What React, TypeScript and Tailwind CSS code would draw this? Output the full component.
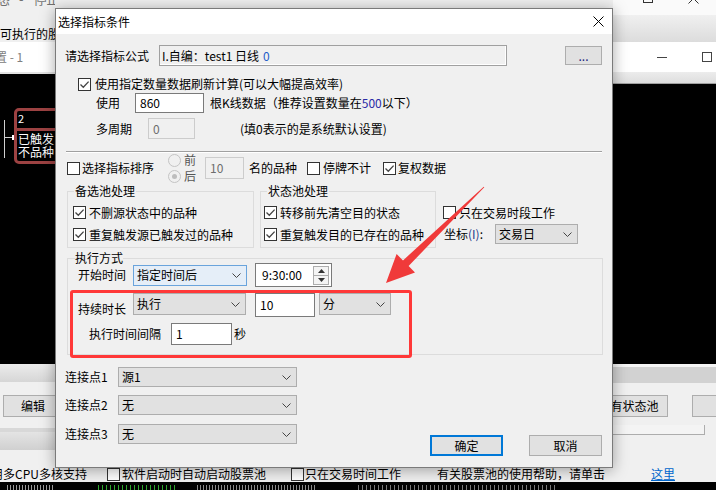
import React from 'react'

const Chevron = () => (
  <svg width="9" height="5" viewBox="0 0 9 5" className="shrink-0">
    <path d="M0.5 0.5 4.5 4.5 8.5 0.5" fill="none" stroke="#444" strokeWidth="1" />
  </svg>
)

const Check = ({ checked = false, className = '' }: { checked?: boolean; className?: string }) => (
  <span className={`flex h-[13px] w-[13px] shrink-0 items-center justify-center border border-[#333] bg-white ${className}`}>
    {checked && (
      <svg width="11" height="11" viewBox="0 0 11 11">
        <path d="M1.5 5.5 4.3 8.3 9.6 2.6" fill="none" stroke="#444" strokeWidth="1.3" />
      </svg>
    )}
  </span>
)

const Radio = ({ on = false }: { on?: boolean }) => (
  <span className="flex h-[13px] w-[13px] shrink-0 items-center justify-center rounded-full border border-[#c4c4c4] bg-[#f0f0f0]">
    {on && <span className="h-[5px] w-[5px] rounded-full bg-[#bdbdbd]" />}
  </span>
)

const Select = ({ value, className = '', hover = false }: { value: string; className?: string; hover?: boolean }) => (
  <div
    className={`flex shrink-0 items-center justify-between border pl-[3px] pr-[5px] ${
      hover ? 'border-[#6aa4dc] bg-[#e5eef8]' : 'border-[#adadad] bg-[#e1e1e1]'
    } ${className}`}
  >
    <span>{value}</span>
    <Chevron />
  </div>
)

function LeftPane() {
  return (
    <div className="flex w-[55px] shrink-0 flex-col">
      <div className="flex h-[15px] items-start whitespace-nowrap text-[13px] leading-[15px] text-[#707070]">
        <span className="-ml-[3px] -mt-[9px]">态</span>
        <span className="ml-[9px] -mt-[9px]">-</span>
        <span className="ml-[10px] -mt-[9px]">停止中</span>
      </div>
      <div className="h-[27px] whitespace-nowrap pt-[12px]">可执行的股</div>
      <div className="h-[30px] whitespace-nowrap bg-white pt-[8px] text-[#808080]">
        <span className="-ml-[5px]">置 - 1</span>
      </div>
      <div className="h-[2px] bg-[#e3e3e3]" />
      <div className="relative h-[290px] bg-black">
        {/* 连线 */}
        <svg width="16" height="60" className="absolute left-0 top-[44px]">
          <path d="M4.5 2 V40 M4.5 19.5 H16" stroke="#d0d0d0" strokeWidth="1" fill="none" />
          <rect x="12" y="17" width="4" height="5" fill="#fff" />
        </svg>
        <div className="absolute left-[14px] top-[34px] flex h-[56px] w-[64px] flex-col rounded-[5px] border-[3px] border-[#9c4242] text-white">
          <div className="h-[20px] border-b-[3px] border-[#9c4242] pl-[1px] pt-[2px] text-[11px] leading-[11px]">2</div>
          <div className="pl-[1px] pt-px text-[12px] leading-[13px]">
            <div>已触发</div>
            <div>不品种</div>
          </div>
        </div>
      </div>
      <div className="h-[18px] bg-gradient-to-b from-[#ececec] to-[#d6d6d6]" />
      <div className="h-[13px]" />
      <div className="ml-[3px] flex h-[22px] w-[60px] items-center justify-center border border-[#adadad] bg-[#e1e1e1]">编辑</div>
      <div className="h-[11px]" />
      <div className="h-[4px] bg-[#d8d8d8]" />
      <div className="h-[18px] bg-gradient-to-b from-[#e4e4e4] to-[#d0d0d0]" />
      <div className="h-[16px]" />
    </div>
  )
}

function RightPane() {
  return (
    <div className="flex w-[103px] shrink-0 flex-col">
      <div className="flex h-[15px] items-start bg-[#fafafa]">
        <span className="ml-[30px] -mt-[7px] h-[10px] w-[10px] border border-[#333]" />
        <svg width="11" height="11" viewBox="0 0 11 11" className="ml-[35px] -mt-[7px]">
          <path d="M0.5 0.5 10.5 10.5 M10.5 0.5 0.5 10.5" stroke="#333" strokeWidth="1" />
        </svg>
      </div>
      <div className="h-[27px] bg-gradient-to-b from-[#f0f0f0] to-[#dcdcdc]" />
      <div className="flex h-[30px] items-center bg-white">
        <span className="ml-[44px] h-px w-[10px] bg-[#444]" />
        <span className="ml-[35px] h-[10px] w-[10px] border border-[#444]" />
      </div>
      <div className="h-[11px] bg-gradient-to-b from-[#ececec] to-[#dedede]" />
      <div className="h-px bg-[#a0a0a0]" />
      <div className="h-[280px] bg-black" />
      <div className="h-[3px] bg-[#f5f5f5]" />
      <div className="h-[16px] bg-[#d2d2d2]" />
      <div className="h-[12px]" />
      <div className="flex h-[22px]">
        <div className="-ml-[12px] flex h-[22px] w-[67px] shrink-0 items-center justify-center border border-[#adadad] bg-[#e1e1e1]">有状态池</div>
        <div className="ml-[24px] h-[22px] w-[40px] shrink-0 border border-[#adadad] bg-[#e1e1e1]" />
      </div>
      <div className="h-[8px]" />
      <div className="h-[10px] w-[92px] border-b border-r border-[#adadad] bg-[#f4f4f4]" />
      <div className="h-[31px]" />
    </div>
  )
}

function StatusRow() {
  return (
    <div className="flex h-[16px] items-center whitespace-nowrap bg-[#f0f0f0]">
      <span className="w-[107px] shrink-0">
        <span className="-ml-[9px]">用多CPU多核支持</span>
      </span>
      <span className="flex w-[184px] shrink-0 items-center">
        <Check />
        <span className="ml-[2px]">软件启动时自动启动股票池</span>
      </span>
      <span className="flex w-[146px] shrink-0 items-center">
        <Check />
        <span className="ml-[1px]">只在交易时间工作</span>
      </span>
      <span className="w-[214px] shrink-0">有关股票池的使用帮助，请单击</span>
      <span className="text-[#0066cc] underline">这里</span>
    </div>
  )
}

function Dialog() {
  return (
    <div className="absolute left-[55px] top-[8px] flex h-[460px] w-[558px] flex-col overflow-hidden border border-[#7a7a7a] bg-[#f0f0f0] shadow-[0_2px_14px_rgba(0,0,0,0.35)]">
      <div className="flex h-[25px] shrink-0 items-center justify-between bg-white pl-[2px] pr-[8px]">
        <span>选择指标条件</span>
        <svg width="11" height="11" viewBox="0 0 11 11">
          <path d="M0.5 0.5 10.5 10.5 M10.5 0.5 0.5 10.5" stroke="#000" strokeWidth="1" />
        </svg>
      </div>

      <div className="flex flex-col pl-[9px] pt-[11px]">
        {/* 公式 */}
        <div className="flex h-[21px] items-center">
          <span className="w-[94px] shrink-0">请选择指标公式</span>
          <div className="flex h-[21px] w-[348px] shrink-0 items-center border border-[#a0a0a0] pl-[2px] shadow-[inset_-1px_-1px_0_#ffffff]">
            I.自编：test1 日线<span className="ml-[4px] text-[#1e5cc8]">0</span>
          </div>
          <div className="ml-[58px] flex h-[19px] w-[37px] shrink-0 items-center justify-center border border-[#adadad] bg-[#e1e1e1] text-[#1a237e]">
            ...
          </div>
        </div>

        <div className="mt-[11px] flex h-[14px] items-center">
          <Check checked className="ml-[13px]" />
          <span className="ml-[4px]">使用指定数量数据刷新计算(可以大幅提高效率)</span>
        </div>

        <div className="mt-[2px] flex h-[20px] items-center">
          <span className="ml-[31px] w-[39px] shrink-0">使用</span>
          <div className="flex h-[20px] w-[69px] shrink-0 items-center border border-[#7a7a7a] bg-white pl-[4px]">860</div>
          <span className="ml-[6px]">
            根K线数据（推荐设置数量在<span className="text-[#2a2aa6]">500</span>以下）
          </span>
        </div>

        <div className="mt-[5px] flex h-[21px] items-center">
          <span className="ml-[31px] w-[52px] shrink-0">多周期</span>
          <div className="flex h-[21px] w-[47px] shrink-0 items-center border border-[#cccccc] bg-[#f0f0f0] pl-[4px] text-[#6d6d6d]">0</div>
          <span className="ml-[45px]">(填0表示的是系统默认设置)</span>
        </div>

        <div className="ml-[1px] mt-[12px] h-[2px] w-[536px] border-b border-t border-b-white border-t-[#a0a0a0]" />

        {/* 排序 */}
        <div className="flex h-[30px] items-center">
          <Check className="ml-[2px]" />
          <span className="ml-[2px]">选择指标排序</span>
          <div className="ml-[14px] flex h-[30px] flex-col text-[#555]">
            <div className="flex h-[14px] items-center">
              <Radio />
              <span className="ml-[3px]">前</span>
            </div>
            <div className="mt-[2px] flex h-[14px] items-center">
              <Radio on />
              <span className="ml-[3px]">后</span>
            </div>
          </div>
          <div className="ml-[9px] flex h-[22px] w-[39px] shrink-0 items-center border border-[#cccccc] bg-[#f0f0f0] pl-[4px] text-[#6d6d6d]">10</div>
          <span className="ml-[5px]">名的品种</span>
          <Check className="ml-[10px]" />
          <span className="ml-[3px]">停牌不计</span>
          <Check checked className="ml-[12px]" />
          <span className="ml-[2px]">复权数据</span>
        </div>

        {/* 备选池 / 状态池 */}
        <div className="mt-[1px] flex items-start">
          <fieldset className="ml-[2px] h-[64px] w-[187px] shrink-0 border border-[#dcdcdc] pl-[5px]">
            <legend className="ml-[1px] px-[1px] leading-[14px]">备选池处理</legend>
            <div className="mt-[7px] flex h-[15px] items-center">
              <Check checked />
              <span className="ml-[3px]">不删源状态中的品种</span>
            </div>
            <div className="mt-[7px] flex h-[15px] items-center">
              <Check checked />
              <span className="ml-[3px]">重复触发源已触发过的品种</span>
            </div>
          </fieldset>
          <fieldset className="ml-[6px] h-[64px] w-[176px] shrink-0 border border-[#dcdcdc] pl-[3px]">
            <legend className="ml-[3px] px-[1px] leading-[14px]">状态池处理</legend>
            <div className="mt-[7px] flex h-[15px] items-center">
              <Check checked />
              <span className="ml-[3px]">转移前先清空目的状态</span>
            </div>
            <div className="mt-[7px] flex h-[15px] items-center">
              <Check checked />
              <span className="ml-[3px]">重复触发目的已存在的品种</span>
            </div>
          </fieldset>
          <div className="ml-[7px] flex flex-col">
            <div className="mt-[22px] flex h-[13px] items-center">
              <Check />
              <span className="ml-[3px]">只在交易时段工作</span>
            </div>
            <div className="mt-[5px] flex h-[20px] items-center">
              <span className="ml-[1px] w-[51px] shrink-0">
                坐标<span className="text-[#1c3c8c]">(I)</span>:
              </span>
              <Select value="交易日" className="h-[20px] w-[83px]" />
            </div>
          </div>
        </div>

        {/* 执行方式 */}
        <fieldset className="ml-[2px] mt-[3px] h-[104px] w-[536px] border border-[#dcdcdc] pl-[7px]">
          <legend className="leading-[14px]">执行方式</legend>
          <div className="-mt-[2px] flex h-[24px] items-center pl-[3px]">
            <span className="w-[55px] shrink-0">开始时间</span>
            <Select value="指定时间后" hover className="h-[21px] w-[114px]" />
            <div className="ml-[8px] flex h-[24px] w-[77px] shrink-0 items-center border border-[#7a7a7a] bg-white pl-[6px]">
              <span className="flex-1">9:30:00</span>
              <div className="mr-[2px] flex h-[19px] w-[16px] flex-col border border-[#adadad] bg-[#f4f4f4]">
                <div className="flex flex-1 items-center justify-center border-b border-[#adadad]">
                  <svg width="7" height="4" viewBox="0 0 7 4"><path d="M0 4 3.5 0 7 4Z" fill="#333" /></svg>
                </div>
                <div className="flex flex-1 items-center justify-center">
                  <svg width="7" height="4" viewBox="0 0 7 4"><path d="M0 0 3.5 4 7 0Z" fill="#333" /></svg>
                </div>
              </div>
            </div>
          </div>

          <div className="-ml-[5px] mt-[3px] h-[68px] w-[342px] rounded-[3px] border-[3px] border-[#ff3838]">
            <div className="flex items-start">
              <span className="ml-[5px] mt-[9px] w-[55px] shrink-0">持续时长</span>
              <Select value="执行" className="h-[22px] w-[113px]" />
              <div className="ml-[9px] flex h-[24px] w-[60px] shrink-0 items-center border border-[#7a7a7a] bg-white pl-[4px]">10</div>
              <Select value="分" className="ml-[4px] h-[22px] w-[72px]" />
            </div>
            <div className="mt-[6px] flex h-[22px] items-center">
              <span className="ml-[16px] w-[82px] shrink-0">执行时间间隔</span>
              <div className="flex h-[22px] w-[61px] shrink-0 items-center border border-[#7a7a7a] bg-white pl-[4px]">1</div>
              <span className="ml-[2px]">秒</span>
            </div>
          </div>
        </fieldset>

        {/* 连接点 + 按钮 */}
        <div className="mt-[12px] flex items-start">
          <div className="flex flex-col">
            <div className="flex h-[20px] items-center">
              <span className="w-[53px] shrink-0">连接点1</span>
              <Select value="源1" className="h-[20px] w-[179px]" />
            </div>
            <div className="mt-[8px] flex h-[20px] items-center">
              <span className="w-[53px] shrink-0">连接点2</span>
              <Select value="无" className="h-[20px] w-[179px]" />
            </div>
            <div className="mt-[9px] flex h-[20px] items-center">
              <span className="w-[53px] shrink-0">连接点3</span>
              <Select value="无" className="h-[20px] w-[179px]" />
            </div>
          </div>
          <div className="ml-[133px] mt-[68px] flex">
            <div className="flex h-[21px] w-[73px] items-center justify-center border-2 border-[#0078d7] bg-[#e1e1e1]">确定</div>
            <div className="ml-[26px] flex h-[21px] w-[73px] items-center justify-center border border-[#adadad] bg-[#e1e1e1]">取消</div>
          </div>
        </div>
      </div>
    </div>
  )
}

export default function App() {
  return (
    <div className="relative h-[490px] w-[716px] overflow-hidden bg-[#f0f0f0] font-['Noto_Sans_CJK_SC','Noto_Sans',sans-serif] text-[12px] leading-[14px] text-black">
      <div className="flex h-full flex-col">
        <div className="flex h-[466px]">
          <LeftPane />
          <div className="flex-1 bg-[#f0f0f0]" />
          <RightPane />
        </div>
        <StatusRow />
        <div className="flex h-[8px] items-end bg-black">
          <div className="ml-[5px] h-[5px] w-[50px] bg-[repeating-linear-gradient(90deg,#000_0,#000_2px,#9a9a9a_2px,#9a9a9a_3px)]" />
          <div className="ml-[40px] h-[5px] w-[80px] bg-[repeating-linear-gradient(90deg,#000_0,#000_3px,#2fa82f_3px,#2fa82f_4px)]" />
          <div className="ml-[20px] h-[5px] w-[120px] bg-[repeating-linear-gradient(90deg,#000_0,#000_2px,#8a8a8a_2px,#8a8a8a_3px)]" />
          <div className="ml-[40px] h-[5px] w-[200px] bg-[repeating-linear-gradient(90deg,#000_0,#000_3px,#7a7a7a_3px,#7a7a7a_4px)]" />
        </div>
      </div>

      <Dialog />

      {/* 标注箭头 */}
      <svg className="pointer-events-none absolute inset-0" width="716" height="490" viewBox="0 0 716 490">
        <polygon
          points="484.3,187.3 408.6,266 415,272.4 386,283 396.6,254 403,260.4 483.7,186.7"
          fill="#f03a3a"
        />
      </svg>
    </div>
  )
}
